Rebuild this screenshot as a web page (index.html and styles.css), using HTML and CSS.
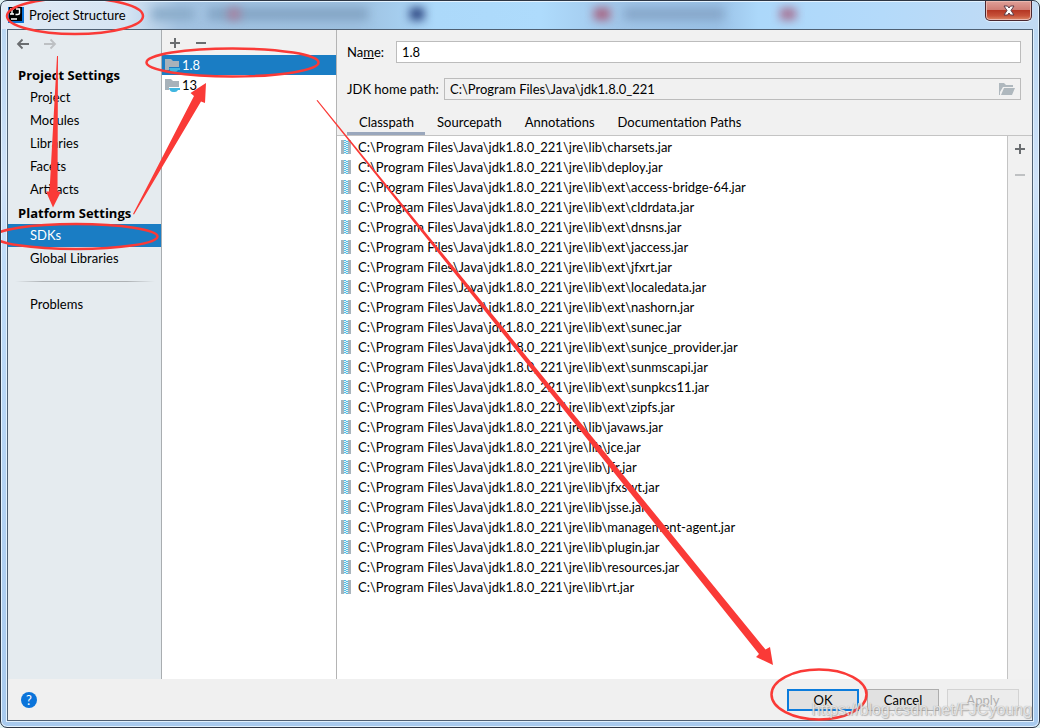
FILE: index.html
```html
<!DOCTYPE html>
<html lang="en">
<head>
<meta charset="utf-8">
<title>Project Structure</title>
<link rel="stylesheet" href="styles.css">
</head>
<body>
<svg class="defs" aria-hidden="true">
  <symbol id="jar" viewBox="0 0 10 14">
    <path fill="#a9b4bc" d="M0 0h3v14H0zM7 0h3v14H7z"/>
    <path fill="#e3f4fb" d="M3 0h4v14H3z"/>
    <path stroke="#52bfe6" stroke-width="2" stroke-dasharray="1 1" d="M4 0v14"/>
    <path stroke="#52bfe6" stroke-width="2" stroke-dasharray="1 1" stroke-dashoffset="1" d="M6 0v14"/>
  </symbol>
  <symbol id="sdk" viewBox="0 0 16 15">
    <path fill="#a7b2ba" d="M0 1h6l2 2h6v6H4v3H0z"/>
    <path fill="#40b6e0" d="M4 10h11v2h-2q-1 2-3 2H8q-3 0-4-4z"/>
  </symbol>
</svg>
<div class="window">
  <header class="titlebar">
    <svg class="logo" viewBox="0 0 16 16" aria-hidden="true">
      <path fill="#0a73d8" d="M0 0h16v16H0z"/><path d="M1 0h13v14H1z"/>
      <path fill="none" stroke="#fff" stroke-width="1.400" d="M2 2h4M4 2v5M2 7h4M8 2h3.500v4q0 1.500-2 1.500H7.500M3 12h6"/>
    </svg>
    <h1 class="title">Project Structure</h1>
    <div class="glass" aria-hidden="true"><i class="spot s1"></i><i class="spot s2"></i><i class="spot s3"></i><i class="spot s4"></i><i class="spot s5"></i><i class="spot s6"></i><i class="spot s7"></i></div>
    <button class="close" aria-label="Close">
      <svg width="12" height="11" viewBox="0 0 12 11"><path fill="#fff" stroke="#5a3b46" d="M1 1h3.500L6 3 7.500 1H11L8 5.500 11 10H7.500L6 8 4.500 10H1l3-4.500z"/></svg>
    </button>
  </header>
  <div class="client">
    <div class="panes">
      <nav class="sidebar">
        <div class="history">
          <button class="icon" aria-label="Back"><svg width="14" height="12" viewBox="0 0 14 12"><path fill="none" stroke="#6a6d70" stroke-width="1.800" d="M13 6H2M6.500 1.500L2 6l4.500 4.500"/></svg></button>
          <button class="icon" aria-label="Forward" disabled><svg width="14" height="12" viewBox="0 0 14 12"><path fill="none" stroke="#bdc0c3" stroke-width="1.800" d="M1 6h11M7.500 1.500L12 6l-4.500 4.500"/></svg></button>
        </div>
        <h2 class="group">Project Settings</h2>
        <a class="item" href="#">Project</a>
        <a class="item" href="#">Modules</a>
        <a class="item" href="#">Libraries</a>
        <a class="item" href="#">Facets</a>
        <a class="item" href="#">Artifacts</a>
        <h2 class="group">Platform Settings</h2>
        <a class="item selected" href="#" aria-current="page">SDKs</a>
        <a class="item" href="#">Global Libraries</a>
        <hr class="rule">
        <a class="item" href="#">Problems</a>
      </nav>
      <section class="sdks" aria-label="SDKs">
        <div class="tools">
          <button class="icon" aria-label="Add SDK"><svg width="12" height="12" viewBox="0 0 12 12"><path stroke="#6a6d70" stroke-width="2" d="M1 6h10M6 1v10"/></svg></button>
          <button class="icon" aria-label="Remove SDK"><svg width="12" height="12" viewBox="0 0 12 12"><path stroke="#6a6d70" stroke-width="2" d="M1 6h10"/></svg></button>
        </div>
        <ul class="list">
          <li class="sdk selected"><svg class="sdk-icon"><use href="#sdk"/></svg>1.8</li>
          <li class="sdk"><svg class="sdk-icon"><use href="#sdk"/></svg>13</li>
        </ul>
      </section>
      <main class="editor">
        <div class="field">
          <label class="name-label" for="name">Na<u>m</u>e:</label>
          <input class="input name" id="name" type="text" value="1.8">
        </div>
        <div class="field path">
          <label class="path-label" for="home">JDK home path:</label>
          <div class="input browse">
            <input class="bare" id="home" type="text" value="C:\Program Files\Java\jdk1.8.0_221" readonly>
            <button class="icon" aria-label="Browse"><svg width="16" height="12" viewBox="0 0 16 12"><path fill="#afb8be" d="M0 0h5l2 2h7v2H4L1 9v3H0zM5 5h11l-3 7H2z"/></svg></button>
          </div>
        </div>
        <div class="tabs" role="tablist">
          <button class="tab active" role="tab" aria-selected="true">Classpath</button>
          <button class="tab" role="tab">Sourcepath</button>
          <button class="tab" role="tab">Annotations</button>
          <button class="tab" role="tab">Documentation Paths</button>
        </div>
        <div class="roots">
          <ul class="list jars">
            <li class="jar"><svg class="jar-icon"><use href="#jar"/></svg>C:\Program Files\Java\jdk1.8.0_221\jre\lib\charsets.jar</li>
            <li class="jar"><svg class="jar-icon"><use href="#jar"/></svg>C:\Program Files\Java\jdk1.8.0_221\jre\lib\deploy.jar</li>
            <li class="jar"><svg class="jar-icon"><use href="#jar"/></svg>C:\Program Files\Java\jdk1.8.0_221\jre\lib\ext\access-bridge-64.jar</li>
            <li class="jar"><svg class="jar-icon"><use href="#jar"/></svg>C:\Program Files\Java\jdk1.8.0_221\jre\lib\ext\cldrdata.jar</li>
            <li class="jar"><svg class="jar-icon"><use href="#jar"/></svg>C:\Program Files\Java\jdk1.8.0_221\jre\lib\ext\dnsns.jar</li>
            <li class="jar"><svg class="jar-icon"><use href="#jar"/></svg>C:\Program Files\Java\jdk1.8.0_221\jre\lib\ext\jaccess.jar</li>
            <li class="jar"><svg class="jar-icon"><use href="#jar"/></svg>C:\Program Files\Java\jdk1.8.0_221\jre\lib\ext\jfxrt.jar</li>
            <li class="jar"><svg class="jar-icon"><use href="#jar"/></svg>C:\Program Files\Java\jdk1.8.0_221\jre\lib\ext\localedata.jar</li>
            <li class="jar"><svg class="jar-icon"><use href="#jar"/></svg>C:\Program Files\Java\jdk1.8.0_221\jre\lib\ext\nashorn.jar</li>
            <li class="jar"><svg class="jar-icon"><use href="#jar"/></svg>C:\Program Files\Java\jdk1.8.0_221\jre\lib\ext\sunec.jar</li>
            <li class="jar"><svg class="jar-icon"><use href="#jar"/></svg>C:\Program Files\Java\jdk1.8.0_221\jre\lib\ext\sunjce_provider.jar</li>
            <li class="jar"><svg class="jar-icon"><use href="#jar"/></svg>C:\Program Files\Java\jdk1.8.0_221\jre\lib\ext\sunmscapi.jar</li>
            <li class="jar"><svg class="jar-icon"><use href="#jar"/></svg>C:\Program Files\Java\jdk1.8.0_221\jre\lib\ext\sunpkcs11.jar</li>
            <li class="jar"><svg class="jar-icon"><use href="#jar"/></svg>C:\Program Files\Java\jdk1.8.0_221\jre\lib\ext\zipfs.jar</li>
            <li class="jar"><svg class="jar-icon"><use href="#jar"/></svg>C:\Program Files\Java\jdk1.8.0_221\jre\lib\javaws.jar</li>
            <li class="jar"><svg class="jar-icon"><use href="#jar"/></svg>C:\Program Files\Java\jdk1.8.0_221\jre\lib\jce.jar</li>
            <li class="jar"><svg class="jar-icon"><use href="#jar"/></svg>C:\Program Files\Java\jdk1.8.0_221\jre\lib\jfr.jar</li>
            <li class="jar"><svg class="jar-icon"><use href="#jar"/></svg>C:\Program Files\Java\jdk1.8.0_221\jre\lib\jfxswt.jar</li>
            <li class="jar"><svg class="jar-icon"><use href="#jar"/></svg>C:\Program Files\Java\jdk1.8.0_221\jre\lib\jsse.jar</li>
            <li class="jar"><svg class="jar-icon"><use href="#jar"/></svg>C:\Program Files\Java\jdk1.8.0_221\jre\lib\management-agent.jar</li>
            <li class="jar"><svg class="jar-icon"><use href="#jar"/></svg>C:\Program Files\Java\jdk1.8.0_221\jre\lib\plugin.jar</li>
            <li class="jar"><svg class="jar-icon"><use href="#jar"/></svg>C:\Program Files\Java\jdk1.8.0_221\jre\lib\resources.jar</li>
            <li class="jar"><svg class="jar-icon"><use href="#jar"/></svg>C:\Program Files\Java\jdk1.8.0_221\jre\lib\rt.jar</li>
          </ul>
          <div class="side">
            <button class="icon" aria-label="Add path"><svg width="12" height="12" viewBox="0 0 12 12"><path stroke="#6a6d70" stroke-width="2" d="M1 6h10M6 1v10"/></svg></button>
            <button class="icon" aria-label="Remove path" disabled><svg width="12" height="12" viewBox="0 0 12 12"><path stroke="#bfc1c3" stroke-width="2" d="M1 6h10"/></svg></button>
          </div>
        </div>
      </main>
    </div>
    <footer class="footer">
      <button class="help" aria-label="Help">?</button>
      <button class="button primary">OK</button>
      <button class="button">Cancel</button>
      <button class="button" disabled>Apply</button>
    </footer>
  </div>
  <svg class="marks" viewBox="0 0 1040 728" preserveAspectRatio="none" aria-hidden="true">
    <g fill="none" stroke="#fa3a37" stroke-width="2.500">
      <ellipse cx="75" cy="16" rx="68" ry="18"/>
      <ellipse cx="232.500" cy="62.500" rx="86" ry="14"/>
      <ellipse cx="76" cy="236.500" rx="81.500" ry="12.500"/>
      <ellipse cx="819" cy="694.500" rx="47.500" ry="25"/>
    </g>
    <g fill="#fa3a37">
      <path d="M57 56h1L57.500 191.500h3.500L53 207.500 46 191.500h3.500z"/>
      <path d="M133 214l1 .5L201 101.500l4 1.500 1-20-15.500 10 3.500 3z"/>
      <path d="M316.500 100.500l1-.5L765.500 649.500l4.500-2.500 3 18-17-8 3-3z"/>
    </g>
  </svg>
  <div class="watermark">https://blog.csdn.net/FJCyoung</div>
</div>
</body>
</html>
```
FILE: styles.css
```css
* { box-sizing: border-box; }
body {
  margin: 0;
  background: #dff0f3;
  color: #000;
  font: 13px/20px Lato, "Open Sans", sans-serif;
}
button, input { font: inherit; color: inherit; }
h1, h2, ul { margin: 0; padding: 0; font-weight: 400; font-size: 13px; }
.defs { position: absolute; width: 0; height: 0; }
.window {
  position: relative;
  display: flex;
  flex-direction: column;
  min-height: 100vh;
  padding: 0 7px 7px;
  overflow: hidden;
  border: 1px solid #2d3644;
  border-radius: 7px;
  background: linear-gradient(#b7d5f2 0, #cfe2f8 25%, #bfdcf9 36%, #b0d0f2 75%, #a8caee 100%);
  box-shadow: inset 0 0 0 1px #e4f3ff;
}
.titlebar {
  position: relative;
  display: flex;
  align-items: center;
  gap: 5px;
  height: 28px;
  isolation: isolate;
}
.logo { width: 16px; height: 16px; }
.title { flex: 1; }
.glass {
  position: absolute;
  inset: 1px -6px 0;
  z-index: -1;
  overflow: hidden;
  background: linear-gradient(to right, #e1eaf5 0, #d5e4f3 12%, #a3c3e2 17%, #9dc0e0 34%, #acd9fa 42%, #aedbfc 52%, #a0c5e8 60%, #9ac1e6 69%, #acd8fa 73%, #b4dafa 85%, #c2daf3 100%);
}
.spot { position: absolute; top: 6px; height: 12px; filter: blur(5px); }
.s1 { left: 150px; width: 42px; background: #8aabc9; }
.s2 { left: 206px; width: 160px; background: #83a4c4; }
.s3 { left: 226px; width: 12px; background: #a9809f; }
.s4 { left: 408px; width: 14px; background: #223a78; }
.s5 { left: 592px; width: 16px; background: #a75f7d; }
.s6 { left: 622px; width: 100px; background: #86a6c9; }
.s7 { left: 778px; width: 16px; background: #a66f91; }
.close {
  display: grid;
  place-items: center;
  align-self: flex-start;
  width: 47px;
  height: 20px;
  padding: 0;
  border: 1px solid #4b2730;
  border-top: 0;
  border-radius: 0 0 5px 5px;
  background: linear-gradient(#dfa099 0, #cf7c73 48%, #b53724 50%, #c7523a 78%, #de8b69 100%);
  box-shadow: inset 0 0 0 1px #eab7ae, 0 1px 1px #e8f3ff;
}
.client {
  flex: 1;
  display: flex;
  flex-direction: column;
  border: 1px solid #4f6073;
  margin: 0 -1px -1px;
  background: #f0f0f0;
  box-shadow: 0 0 0 1px #e2f1fd;
}
.panes { flex: 1; display: flex; }
.sidebar {
  display: flex;
  flex-direction: column;
  width: 154px;
  border-right: 1px solid #a9adb0;
  background: #e5ebef;
}
.icon {
  display: grid;
  place-items: center;
  padding: 0;
  border: 0;
  background: none;
}
.history { display: flex; gap: 13px; height: 33px; padding: 8px 8px 13px; }
.group { padding: 1px 0 0 10px; font-family: "Open Sans", sans-serif; font-weight: 700; line-height: 22px; }
.item { padding-left: 22px; color: inherit; line-height: 23px; text-decoration: none; }
.selected { background: #1a7dc4; color: #fff; }
.rule {
  width: 140px;
  height: 1px;
  margin: 11px 7px;
  border: 0;
  background: linear-gradient(to right, transparent, #adb1b4 20%, #adb1b4 80%, transparent);
}
.sdks {
  width: 175px;
  border-right: 1px solid #b4b4b4;
  background: #fff;
}
.tools {
  display: flex;
  gap: 14px;
  height: 25px;
  padding: 0 7px;
  background: #f1f1f1;
}
.list { list-style: none; }
.sdk { display: flex; align-items: center; gap: 1px; padding-left: 3px; }
.sdk-icon { width: 16px; height: 15px; }
.editor { flex: 1; display: flex; flex-direction: column; min-width: 0; background: #f1f1f1; }
.field {
  display: flex;
  align-items: center;
  padding: 11px 11px 0 10px;
}
.path { padding-top: 15px; }
.name-label { min-width: 49px; }
.path-label { min-width: 97px; }
.input {
  flex: 1;
  min-width: 0;
  height: 22px;
  padding: 0 5px;
  border: 1px solid #bcbcbc;
  background: #fff;
}
.browse { display: flex; padding-right: 5px; background: #f1f1f1; }
.bare { flex: 1; min-width: 0; padding: 0; border: 0; background: none; outline: 0; }
.tabs {
  display: flex;
  height: 36px;
  padding: 8px 0 0 10px;
  border-bottom: 1px solid #c4c4c4;
}
.tab { padding: 3px 11px 0 12px; border: 0; border-bottom: 3px solid transparent; background: none; }
.active { border-color: #9aa7bc; }
.roots { flex: 1; display: flex; }
.jars { flex: 1; padding: 1px 0 0 4px; background: #fff; }
.jar { display: flex; align-items: center; gap: 7px; white-space: nowrap; }
.jar-icon { width: 10px; height: 14px; }
.side {
  display: flex;
  flex-direction: column;
  gap: 14px;
  width: 25px;
  padding: 7px 6px;
  border-left: 1px solid #c4c4c4;
}
.footer {
  display: flex;
  align-items: center;
  gap: 8px;
  height: 41px;
  padding: 0 13px;
}
.help {
  width: 16px;
  height: 16px;
  margin-right: auto;
  padding: 0;
  border: 0;
  border-radius: 50%;
  background: #0b74da;
  color: #fff;
  font-size: 13px;
  line-height: 16px;
}
.button {
  width: 72px;
  height: 22px;
  padding: 0;
  border: 1px solid #adadad;
  background: #e1e1e1;
  line-height: 20px;
}
.primary { border: 2px solid #0c7cdc; line-height: 18px; }
.button:disabled { border-color: #d3d3d3; background: #ececec; color: #b0b0b0; }
.marks { position: absolute; inset: -1px; width: calc(100% + 2px); height: calc(100% + 2px); pointer-events: none; }
.watermark {
  position: absolute;
  right: 7px;
  bottom: 7px;
  color: #ffffffb0;
  font: 16px/20px "Liberation Sans", sans-serif;
  text-shadow: 0 0 1px #999, 1px 1px 1px #8888;
  pointer-events: none;
}
```
